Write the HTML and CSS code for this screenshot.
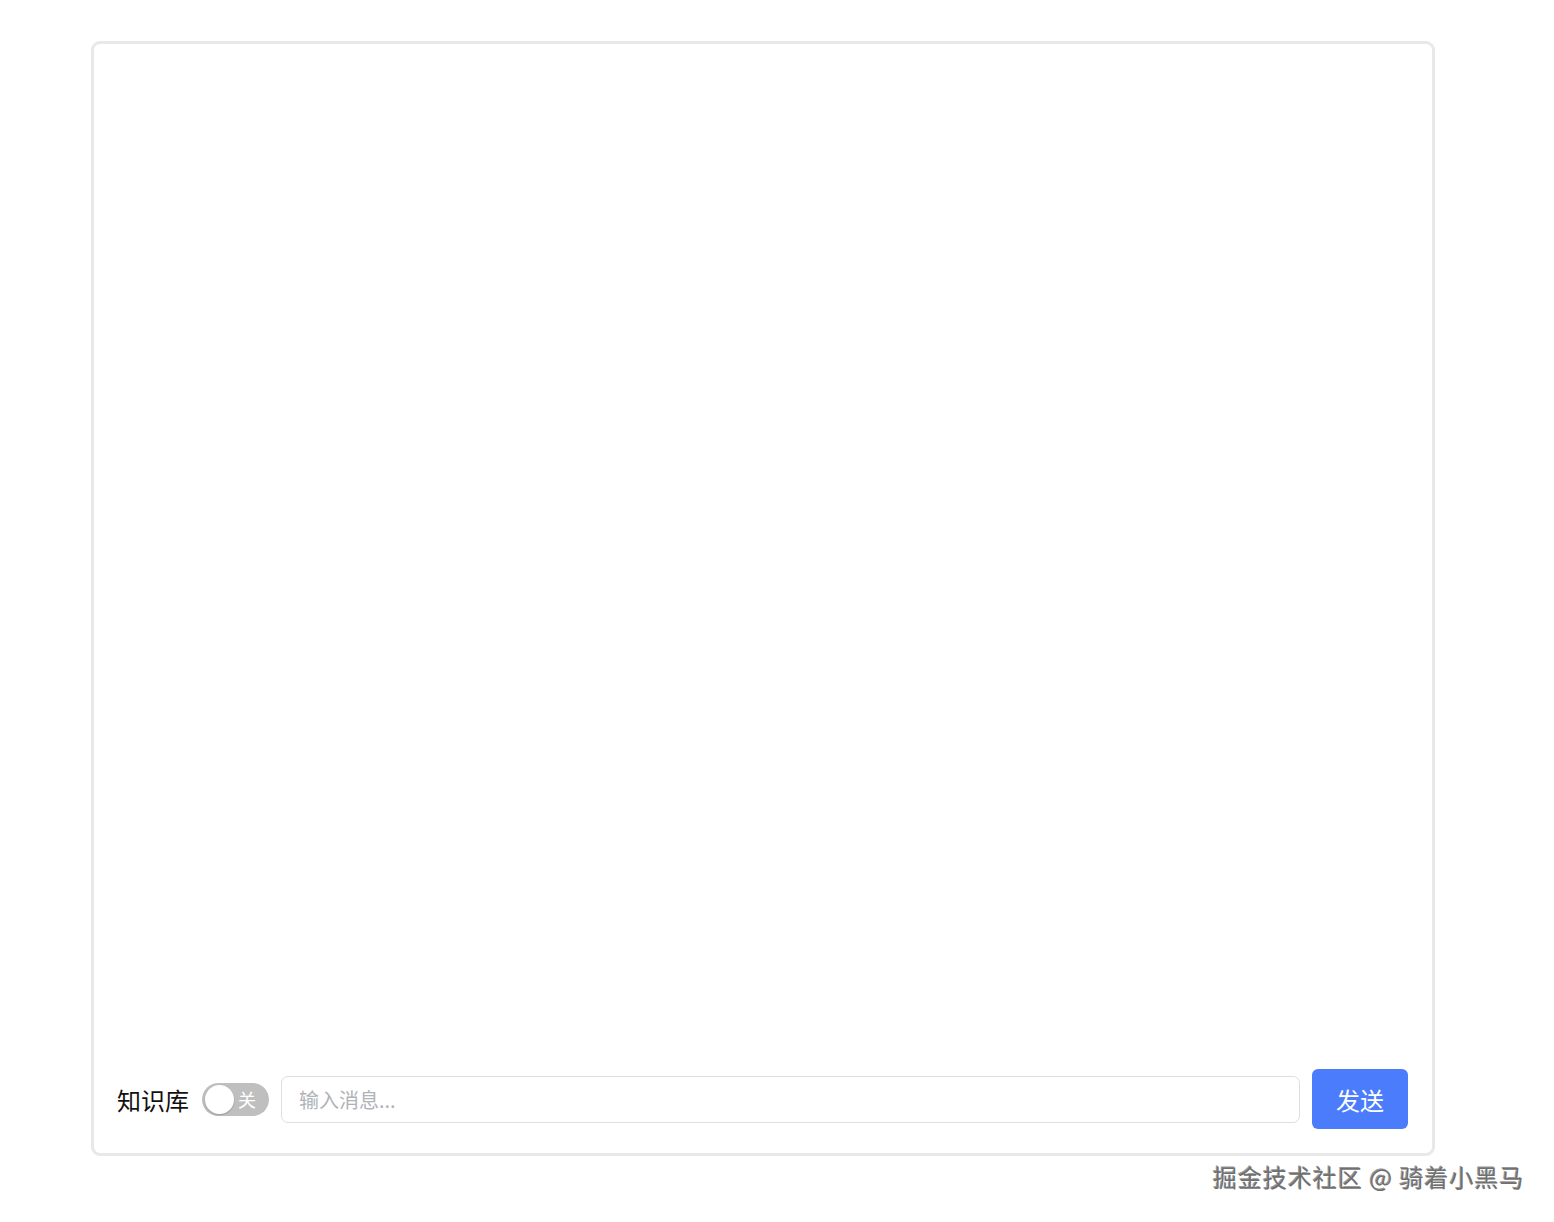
FILE: index.html
```html
<!DOCTYPE html>
<html>
  <head>
    <meta charset="UTF-8" />
    <title>Chat</title>
    <link rel="stylesheet" href="styles.css">
  </head>
  <body>
    <div id="chatBox">
      <div class="messages"></div>
      <div class="inputBar">
        <span class="kbLabel">知识库</span>
        <div class="switch">
          <span class="knob"></span>
          <span class="switchText">关</span>
        </div>
        <input class="msgInput" type="text" placeholder="输入消息..." />
        <button class="sendButton">发送</button>
      </div>
    </div>
    <div class="watermark">掘金技术社区 @ 骑着小黑马</div>
  </body>
</html>
```

FILE: styles.css
```css
body {
  margin: 0;
  background: #fff;
  font-family: "Noto Sans CJK SC", "Noto Sans", sans-serif;
}

#chatBox {
  margin: 41px 0 0 91px;
  width: 1344px;
  height: 1115px;
  box-sizing: border-box;
  border: 3px solid #e8e8e8;
  border-radius: 9px;
  display: flex;
  flex-direction: column;
  padding: 0 24px 24px 23px;
}

.messages {
  flex: 1;
}

.inputBar {
  display: flex;
  align-items: center;
  gap: 12px;
  height: 60px;
}

.kbLabel {
  font-size: 24px;
  color: #111;
  margin-right: 1px;
}

.switch {
  position: relative;
  width: 67px;
  height: 33px;
  border-radius: 17px;
  background: #bfbfbf;
  flex-shrink: 0;
}

.knob {
  position: absolute;
  left: 3px;
  top: 2px;
  width: 29px;
  height: 29px;
  border-radius: 50%;
  background: #fff;
  box-shadow: 0 1px 2px rgba(0, 0, 0, 0.2);
}

.switchText {
  position: absolute;
  left: 36px;
  top: 4px;
  font-size: 18px;
  line-height: 24px;
  color: #fff;
}

.msgInput {
  flex: 1;
  height: 47px;
  box-sizing: border-box;
  border: 1px solid #dcdfe6;
  border-radius: 7px;
  padding: 0 17px;
  font-size: 20px;
  font-family: inherit;
  color: #333;
  outline: none;
}

.msgInput::placeholder {
  color: #b0b3b8;
}

.sendButton {
  width: 96px;
  height: 60px;
  border: none;
  border-radius: 6px;
  background: #4a7cfc;
  color: #fff;
  font-size: 24px;
  font-family: inherit;
}

.watermark {
  position: absolute;
  left: 1213px;
  top: 1159px;
  font-size: 24px;
  line-height: 36px;
  letter-spacing: 1px;
  color: #707070;
  text-shadow: 1px 1px 1px #fff, -1px -1px 0 #999;
  white-space: nowrap;
}
```
